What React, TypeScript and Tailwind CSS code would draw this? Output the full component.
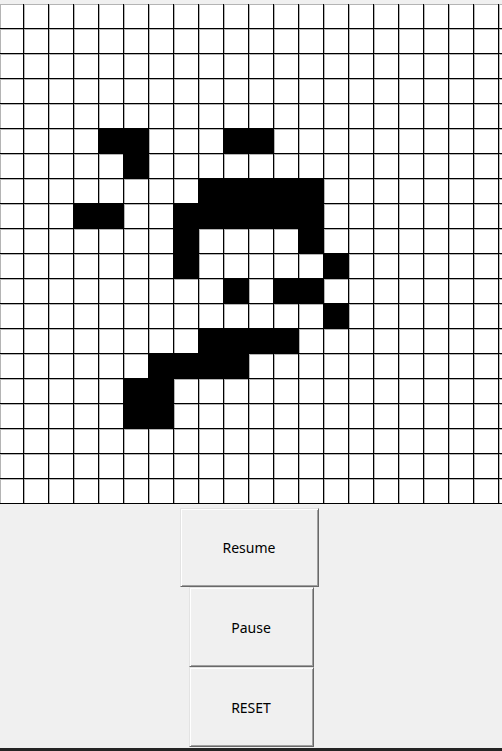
import React from 'react'

const ROWS = 20
const COLS = 20

// filled cells as [row, col]
const filled: [number, number][] = [
  [5, 4], [5, 5], [5, 9], [5, 10],
  [6, 5],
  [7, 8], [7, 9], [7, 10], [7, 11], [7, 12],
  [8, 3], [8, 4], [8, 7], [8, 8], [8, 9], [8, 10], [8, 11], [8, 12],
  [9, 7], [9, 12],
  [10, 7], [10, 13],
  [11, 9], [11, 11], [11, 12],
  [12, 13],
  [13, 8], [13, 9], [13, 10], [13, 11],
  [14, 6], [14, 7], [14, 8], [14, 9],
  [15, 5], [15, 6],
  [16, 5], [16, 6],
]

const isOn = (r: number, c: number) => filled.some(([fr, fc]) => fr === r && fc === c)

function Board() {
  const cells = []
  for (let r = 0; r < ROWS; r++) {
    for (let c = 0; c < COLS + 1; c++) {
      const on = c < COLS && isOn(r, c)
      cells.push(
        <div
          key={`${r}-${c}`}
          className={on ? 'bg-black' : 'bg-white shadow-[inset_1px_1px_0_#b4b4b4]'}
        />
      )
    }
  }
  return (
    <div className="grid gap-px bg-black grid-cols-[23px_repeat(19,24px)_3px] grid-rows-[repeat(20,24px)_0px]">
      {cells}
    </div>
  )
}

function TkButton({ label, wide }: { label: string; wide?: boolean }) {
  return (
    <button
      className={`${wide ? 'w-[139px] h-[79px]' : 'w-[125px] h-[80px]'} bg-[#f0f0f0] border border-t-[#e3e3e3] border-l-[#e3e3e3] border-r-[#696969] border-b-[#696969] shadow-[inset_1px_1px_0_#ffffff,inset_-1px_-1px_0_#a0a0a0] text-[14px] text-black`}
    >
      {label}
    </button>
  )
}

export default function App() {
  return (
    <div className="w-[502px] h-[751px] bg-[#f0f0f0] flex flex-col font-['Noto_Sans','Open_Sans',sans-serif]">
      <div className="pt-[4px]">
        <Board />
      </div>
      <div className="flex flex-col items-center mt-[4px]">
        <div className="ml-[-4px]">
          <TkButton label="Resume" wide />
        </div>
        <TkButton label="Pause" />
        <TkButton label="RESET" />
      </div>
      <div className="mt-auto h-[3px] bg-[#242424]" />
    </div>
  )
}
